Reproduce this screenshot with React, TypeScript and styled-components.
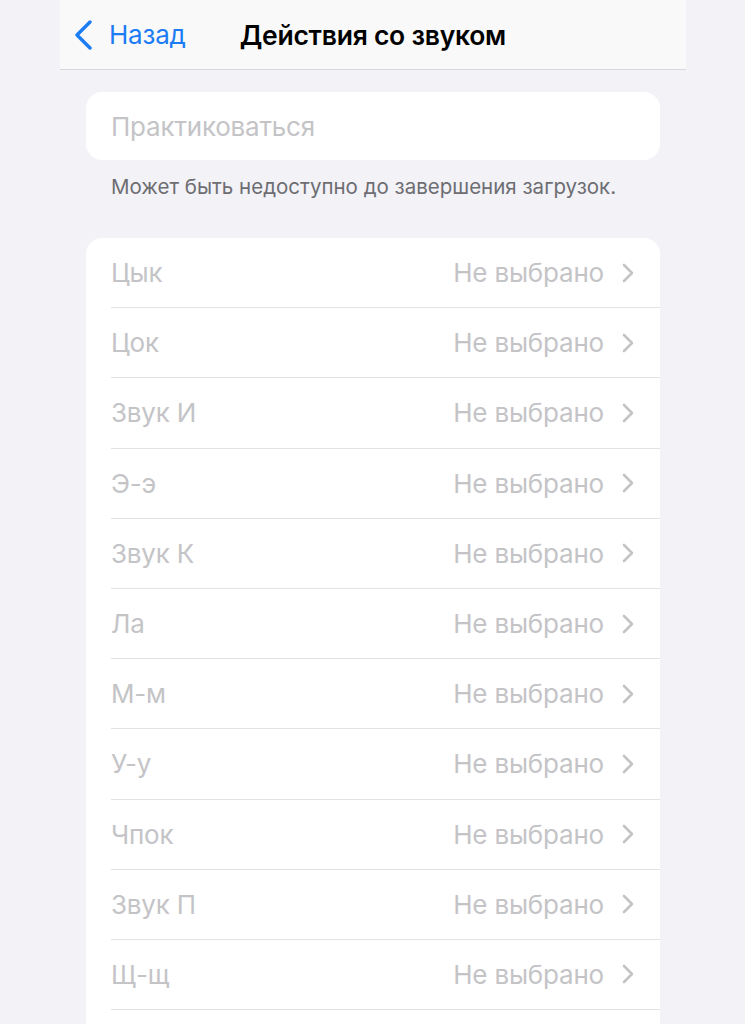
import { FC } from 'react';
import styled, { createGlobalStyle } from 'styled-components';

const colors = {
  pageBg: '#f2f2f7',
  navBg: '#f9f9f9',
  navBorder: '#d9d9dd',
  blue: '#1c7cf4',
  black: '#000000',
  card: '#ffffff',
  disabled: '#c4c4c7',
  footnote: '#6d6d72',
  separator: '#e2e2e6',
};

const GlobalStyle = createGlobalStyle`
  html, body {
    margin: 0;
    padding: 0;
    background: ${colors.pageBg};
    font-family: Inter, "Noto Sans", "Liberation Sans", sans-serif;
    -webkit-font-smoothing: antialiased;
  }
`;

const Screen = styled.div`
  width: 626px;
  margin-left: 60px;
  height: 1024px;
  overflow: hidden;
  background: ${colors.pageBg};
`;

const NavBar = styled.header`
  height: 69px;
  display: flex;
  align-items: center;
  padding: 0 0 0 13px;
  background: ${colors.navBg};
  border-bottom: 1px solid ${colors.navBorder};
`;

const BackButton = styled.button`
  display: flex;
  align-items: center;
  gap: 16px;
  padding: 0;
  border: 0;
  background: none;
  color: ${colors.blue};
  font-family: inherit;
  font-size: 26px;
  font-weight: 400;
  letter-spacing: -0.2px;
  cursor: pointer;
`;

const NavTitle = styled.h1`
  margin: 0 0 0 54px;
  font-size: 26.5px;
  font-weight: 600;
  letter-spacing: -0.25px;
  color: ${colors.black};
`;

const Content = styled.main`
  padding: 22px 26px 0;
`;

const Card = styled.section`
  background: ${colors.card};
  border-radius: 16px;
  overflow: hidden;
`;

const PracticeRow = styled.div`
  height: 68px;
  display: flex;
  align-items: center;
  padding: 0 25px;
  font-size: 26px;
  letter-spacing: -0.2px;
  color: ${colors.disabled};
`;

const Footnote = styled.p`
  margin: 15px 25px 0;
  font-size: 20.5px;
  line-height: 24px;
  color: ${colors.footnote};
`;

const ActionCard = styled(Card)`
  margin-top: 39px;
  padding-bottom: 70px;
`;

const Row = styled.div`
  height: 70.2px;
  margin-left: 25px;
  padding-right: 26px;
  display: flex;
  align-items: center;
  justify-content: space-between;
  box-sizing: border-box;
  border-bottom: 1px solid ${colors.separator};
  font-size: 26px;
  letter-spacing: -0.2px;
  color: ${colors.disabled};
`;

const RowValue = styled.span`
  display: flex;
  align-items: center;
  gap: 18px;
`;

const BackChevron: FC = () => (
  <svg width="20" height="30" viewBox="0 0 20 30" fill="none">
    <path
      d="M17 2 L4 15 L17 28"
      stroke={colors.blue}
      strokeWidth="3.4"
      strokeLinecap="round"
      strokeLinejoin="round"
    />
  </svg>
);

const Disclosure: FC = () => (
  <svg width="12" height="20" viewBox="0 0 12 20" fill="none">
    <path
      d="M2 2 L10 10 L2 18"
      stroke={colors.disabled}
      strokeWidth="2.6"
      strokeLinecap="round"
      strokeLinejoin="round"
    />
  </svg>
);

const actions = [
  'Цык',
  'Цок',
  'Звук И',
  'Э-э',
  'Звук К',
  'Ла',
  'М-м',
  'У-у',
  'Чпок',
  'Звук П',
  'Щ-щ',
];

export default function App() {
  return (
    <>
      <GlobalStyle />
      <Screen>
        <NavBar>
          <BackButton>
            <BackChevron />
            Назад
          </BackButton>
          <NavTitle>Действия со звуком</NavTitle>
        </NavBar>
        <Content>
          <Card>
            <PracticeRow>Практиковаться</PracticeRow>
          </Card>
          <Footnote>Может быть недоступно до завершения загрузок.</Footnote>
          <ActionCard>
            {actions.map((name) => (
              <Row key={name}>
                <span>{name}</span>
                <RowValue>
                  Не выбрано
                  <Disclosure />
                </RowValue>
              </Row>
            ))}
          </ActionCard>
        </Content>
      </Screen>
    </>
  );
}
